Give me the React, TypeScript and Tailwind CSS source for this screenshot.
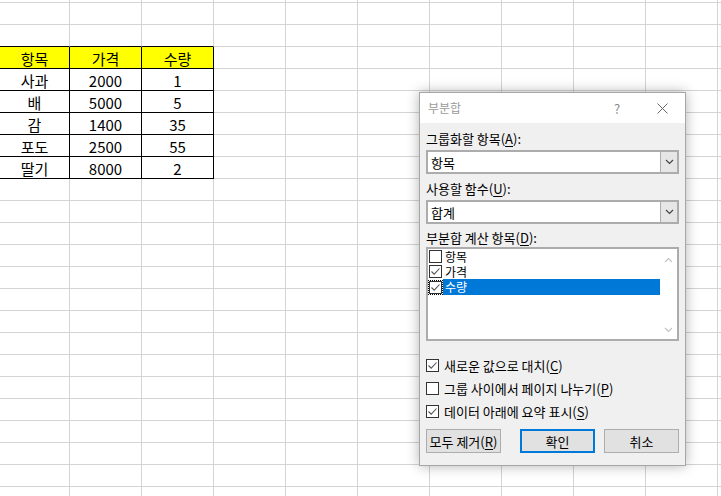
import React from 'react';
import clsx from 'clsx';

// Sheet data - rows of the small table in A3:C8
const TABLE = [
    ['항목', '가격', '수량'],
    ['사과', '2000', '1'],
    ['배', '5000', '5'],
    ['감', '1400', '35'],
    ['포도', '2500', '55'],
    ['딸기', '8000', '2'],
];

const ROW_COUNT = 24;
const COL_COUNT = 11;
const TABLE_TOP = 3; // grid row index of the header

// Component - Sheet (grid of cells behind the dialog)
function Sheet() {
    return (
        <div className="-mt-[19px]">
            {Array.from({ length: ROW_COUNT }).map((_, r) => (
                <div key={r} className="flex">
                    {Array.from({ length: COL_COUNT }).map((__, c) => {
                        const inTable = r >= TABLE_TOP && r < TABLE_TOP + TABLE.length && c < 3;
                        const blackBottom = r >= TABLE_TOP - 1 && r < TABLE_TOP + TABLE.length && c < 3;
                        const text = inTable ? TABLE[r - TABLE_TOP][c] : '';
                        return (
                            <div
                                key={c}
                                className={clsx(
                                    'flex h-[22px] shrink-0 items-center justify-center border-r border-b pt-[1px] text-[15px] leading-none text-black',
                                    c === 0 ? 'w-[70px]' : 'w-[72px]',
                                    blackBottom ? 'border-b-black' : 'border-b-[#d4d4d4]',
                                    inTable ? 'border-r-black' : 'border-r-[#d4d4d4]',
                                    r === TABLE_TOP && c < 3 && 'bg-[#ffff00]',
                                )}
                            >
                                {text}
                            </div>
                        );
                    })}
                </div>
            ))}
        </div>
    );
}

// Component - CheckMark
function CheckMark() {
    return (
        <svg width="11" height="11" viewBox="0 0 11 11" className="block">
            <path d="M1.5 5.5 L4.2 8.2 L9.5 2.5" fill="none" stroke="#555" strokeWidth="1.1" />
        </svg>
    );
}

// Component - CheckBox
function CheckBox(properties: { checked?: boolean; focused?: boolean }) {
    return (
        <div
            className={clsx(
                'flex h-[13px] w-[13px] shrink-0 items-center justify-center border border-[#333] bg-white',
                properties.focused && 'outline-1 outline-offset-0 outline-black outline-dotted',
            )}
        >
            {properties.checked && <CheckMark />}
        </div>
    );
}

// Component - Chevron
function Chevron(properties: { up?: boolean; color: string }) {
    return (
        <svg width="9" height="6" viewBox="0 0 9 6" className="block">
            <path
                d={properties.up ? 'M1 5 L4.5 1.5 L8 5' : 'M1 1 L4.5 4.5 L8 1'}
                fill="none"
                stroke={properties.color}
                strokeWidth="1.2"
            />
        </svg>
    );
}

// Component - Label with accelerator key
function AccessLabel(properties: { text: string; access: string; colon?: boolean }) {
    return (
        <span className="whitespace-pre">
            {properties.text}(<span className="underline underline-offset-2">{properties.access}</span>){properties.colon ? ':' : ''}
        </span>
    );
}

// Component - ComboBox
function ComboBox(properties: { value: string }) {
    return (
        <div className="mt-[2px] flex h-[24px] border-2 border-[#acacac] bg-white">
            <div className="flex flex-1 items-center pl-[3px]">{properties.value}</div>
            <div className="flex w-[17px] items-center justify-center border-l border-[#acacac] bg-[#e6e6e6]">
                <Chevron color="#444" />
            </div>
        </div>
    );
}

// Component - SubtotalDialog
function SubtotalDialog() {
    return (
        <div className="absolute top-[92px] left-[419px] flex h-[374px] w-[267px] flex-col border border-[#a6a6a6] bg-[#f0f0f0] text-[13px] leading-none text-black shadow-[0_0_12px_rgba(0,0,0,0.3)]">
            {/* Title bar */}
            <div className="flex h-[30px] items-center bg-white">
                <span className="pl-[8px] text-[12px] text-[#9a9a9a]">부분합</span>
                <span className="ml-auto w-[16px] text-center text-[13px] text-[#8a8a8a]">?</span>
                <span className="mr-[16px] ml-[30px] flex w-[14px] justify-center">
                    <svg width="11" height="11" viewBox="0 0 11 11" className="block">
                        <path d="M0.5 0.5 L10.5 10.5 M10.5 0.5 L0.5 10.5" stroke="#666" strokeWidth="1" />
                    </svg>
                </span>
            </div>

            {/* Body */}
            <div className="flex flex-col px-[6px]">
                <div className="mt-[5px] flex h-[20px] items-center">
                    <AccessLabel text="그룹화할 항목" access="A" colon />
                </div>
                <ComboBox value="항목" />

                <div className="mt-[4px] flex h-[20px] items-center">
                    <AccessLabel text="사용할 함수" access="U" colon />
                </div>
                <ComboBox value="합계" />

                <div className="mt-[3px] flex h-[20px] items-center">
                    <AccessLabel text="부분합 계산 항목" access="D" colon />
                </div>
                <div className="flex h-[94px] border-2 border-[#acacac] bg-white text-[12px]">
                    <div className="flex flex-1 flex-col">
                        <div className="flex h-[15px] items-center pl-[1px]">
                            <CheckBox />
                            <span className="ml-[1px] flex h-full flex-1 items-center pl-[2px]">항목</span>
                        </div>
                        <div className="flex h-[15px] items-center pl-[1px]">
                            <CheckBox checked />
                            <span className="ml-[1px] flex h-full flex-1 items-center pl-[2px]">가격</span>
                        </div>
                        <div className="flex h-[16px] items-center pl-[1px]">
                            <CheckBox checked focused />
                            <span className="ml-[1px] flex h-full flex-1 items-center bg-[#0078d7] pl-[2px] text-white">수량</span>
                        </div>
                    </div>
                    <div className="flex w-[17px] flex-col items-center justify-between pt-[8px] pb-[6px]">
                        <Chevron up color="#c4c4c4" />
                        <Chevron color="#c4c4c4" />
                    </div>
                </div>

                <div className="mt-[16px] flex h-[16px] items-center gap-[5px]">
                    <CheckBox checked />
                    <AccessLabel text="새로운 값으로 대치" access="C" />
                </div>
                <div className="mt-[7px] flex h-[16px] items-center gap-[5px]">
                    <CheckBox />
                    <AccessLabel text="그룹 사이에서 페이지 나누기" access="P" />
                </div>
                <div className="mt-[7px] flex h-[16px] items-center gap-[5px]">
                    <CheckBox checked />
                    <AccessLabel text="데이터 아래에 요약 표시" access="S" />
                </div>

                {/* Buttons */}
                <div className="mt-[10px] flex h-[24px]">
                    <button className="flex w-[75px] items-center justify-center border border-[#adadad] bg-[#e1e1e1]">
                        <AccessLabel text="모두 제거" access="R" />
                    </button>
                    <button className="ml-[19px] flex w-[75px] items-center justify-center border-2 border-[#0078d7] bg-[#e1e1e1]">
                        확인
                    </button>
                    <button className="ml-auto flex w-[75px] items-center justify-center border border-[#adadad] bg-[#e1e1e1]">
                        취소
                    </button>
                </div>
            </div>
        </div>
    );
}

// Component - App
export default function App() {
    return (
        <div className="relative h-[496px] w-[721px] overflow-hidden bg-white font-['Noto_Sans_CJK_KR','Noto_Sans',sans-serif]">
            <Sheet />
            <SubtotalDialog />
        </div>
    );
}
